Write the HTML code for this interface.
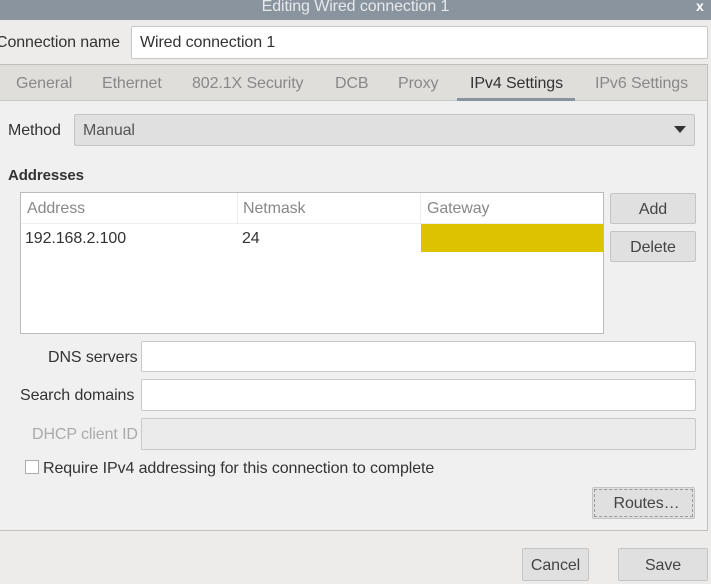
<!DOCTYPE html>
<html><head><meta charset="utf-8"><style>
*{box-sizing:border-box;margin:0;padding:0}
body{width:711px;height:584px;overflow:hidden;background:#edecea;font-family:"Liberation Sans",sans-serif;font-size:16px;color:#333;position:relative;letter-spacing:-0.1px}
.a{position:absolute;white-space:nowrap}
.t{position:absolute;white-space:nowrap;margin-top:1px}
.in{position:absolute;background:#fff;border:1px solid #c8c8c8;border-radius:2px}
.btn{position:absolute;background:#e0e0e0;border:1px solid #c4c4c4;border-radius:2px;text-align:center;color:#444}
</style></head><body>
<div class="a" style="left:0;top:0;width:711px;height:20px;background:#8a949e"></div>
<div class="a" style="left:0;top:-2px;width:711px;text-align:center;color:#e6e9ec;font-size:16px">Editing Wired connection 1</div>
<div class="a" style="left:696px;top:-2px;color:#fff;font-weight:bold;font-size:14px">x</div>
<div class="t" style="left:-4px;top:33px">Connection name</div>
<div class="in" style="left:131px;top:26px;width:577px;height:33px"></div>
<div class="t" style="left:140px;top:33px">Wired connection 1</div>
<div class="a" style="left:0;top:64px;width:708px;height:467px;background:#f0f0f0;border:1px solid #c0c0c0;border-left:none"></div>
<div class="a" style="left:0;top:65px;width:707px;height:36px;background:#e0dedb;border-bottom:1px solid #c8c8c8"></div>
<div class="t" style="left:16px;top:74px;color:#888">General</div>
<div class="t" style="left:102px;top:74px;color:#888">Ethernet</div>
<div class="t" style="left:192px;top:74px;color:#888">802.1X Security</div>
<div class="t" style="left:335px;top:74px;color:#888">DCB</div>
<div class="t" style="left:398px;top:74px;color:#888">Proxy</div>
<div class="t" style="left:470px;top:74px;color:#333">IPv4 Settings</div>
<div class="t" style="left:595px;top:74px;color:#888">IPv6 Settings</div>
<div class="a" style="left:457px;top:98px;width:118px;height:3px;background:#8a949e"></div>
<div class="t" style="left:8px;top:121px">Method</div>
<div class="btn" style="left:74px;top:114px;width:621px;height:32px;background:#e0e0e0"></div>
<div class="t" style="left:83px;top:121px;color:#555">Manual</div>
<div class="a" style="left:674px;top:126px;width:0;height:0;border-left:6px solid transparent;border-right:6px solid transparent;border-top:7px solid #333"></div>
<div class="t" style="left:8px;top:166px;font-weight:bold;font-size:15px">Addresses</div>
<div class="in" style="left:20px;top:192px;width:584px;height:142px;border-color:#bbb;border-radius:0"></div>
<div class="a" style="left:21px;top:223px;width:582px;height:1px;background:#eee"></div>
<div class="a" style="left:237px;top:193px;width:1px;height:30px;background:#eee"></div>
<div class="a" style="left:420px;top:193px;width:1px;height:30px;background:#eee"></div>
<div class="t" style="left:27px;top:199px;color:#888">Address</div>
<div class="t" style="left:243px;top:199px;color:#888">Netmask</div>
<div class="t" style="left:427px;top:199px;color:#888">Gateway</div>
<div class="t" style="left:25px;top:229px">192.168.2.100</div>
<div class="t" style="left:242px;top:229px">24</div>
<div class="a" style="left:421px;top:224px;width:182px;height:28px;background:#dcc200"></div>
<div class="btn" style="left:610px;top:193px;width:86px;height:31px;line-height:31px">Add</div>
<div class="btn" style="left:610px;top:231px;width:86px;height:31px;line-height:31px">Delete</div>
<div class="t" style="left:48px;top:348px">DNS servers</div>
<div class="in" style="left:141px;top:341px;width:555px;height:31px"></div>
<div class="t" style="left:20px;top:386px">Search domains</div>
<div class="in" style="left:141px;top:379px;width:555px;height:32px"></div>
<div class="t" style="left:32px;top:425px;color:#aaa">DHCP client ID</div>
<div class="in" style="left:141px;top:418px;width:555px;height:32px;background:#ebebeb"></div>
<div class="a" style="left:25px;top:460px;width:14px;height:14px;background:#fff;border:1px solid #aaa"></div>
<div class="t" style="left:43px;top:459px">Require IPv4 addressing for this connection to complete</div>
<div class="btn" style="left:592px;top:487px;width:103px;height:32px;line-height:32px;outline:1px dashed #999;outline-offset:-3px;padding-left:6px">Routes…</div>
<div class="btn" style="left:522px;top:548px;width:67px;height:33px;line-height:33px">Cancel</div>
<div class="btn" style="left:618px;top:548px;width:90px;height:33px;line-height:33px">Save</div>
</body></html>
